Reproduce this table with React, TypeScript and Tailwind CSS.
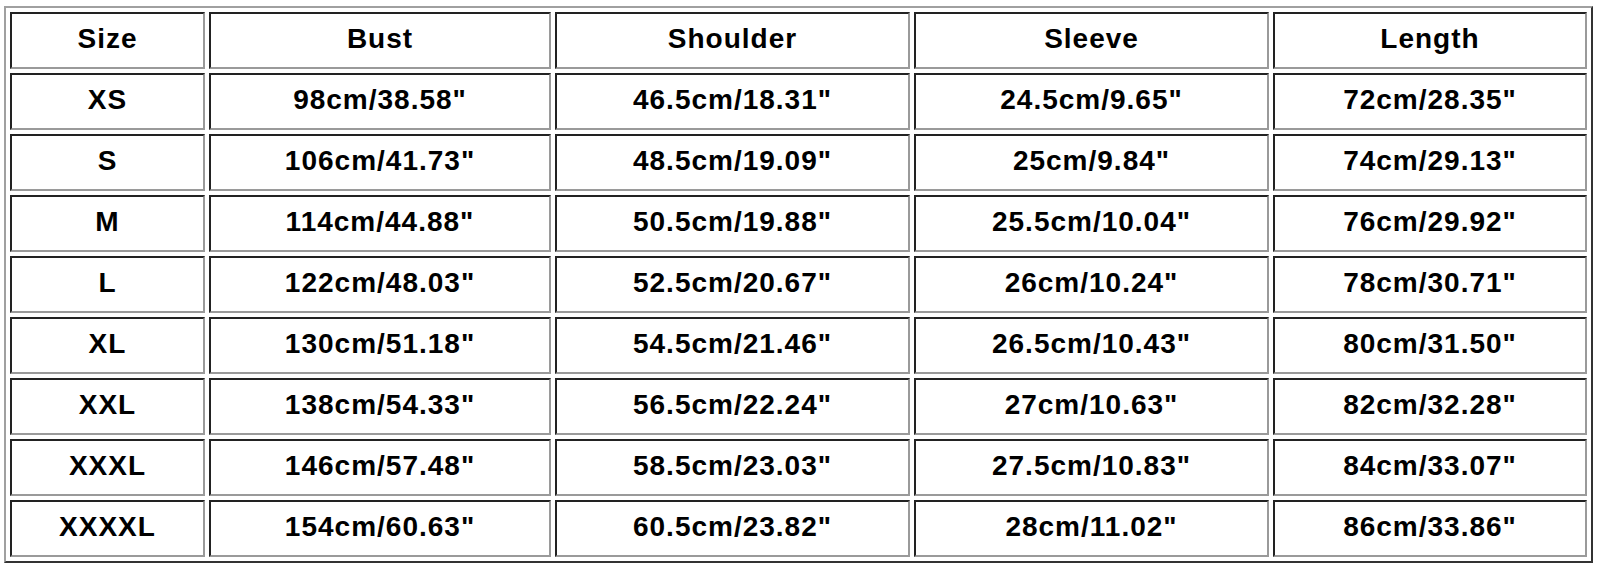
const headers = ["Size", "Bust", "Shoulder", "Sleeve", "Length"];

const widths = ["w-[195px]", "w-[342px]", "w-[355px]", "w-[355px]", "w-[314px]"];

const rows: string[][] = [
  ["XS", '98cm/38.58"', '46.5cm/18.31"', '24.5cm/9.65"', '72cm/28.35"'],
  ["S", '106cm/41.73"', '48.5cm/19.09"', '25cm/9.84"', '74cm/29.13"'],
  ["M", '114cm/44.88"', '50.5cm/19.88"', '25.5cm/10.04"', '76cm/29.92"'],
  ["L", '122cm/48.03"', '52.5cm/20.67"', '26cm/10.24"', '78cm/30.71"'],
  ["XL", '130cm/51.18"', '54.5cm/21.46"', '26.5cm/10.43"', '80cm/31.50"'],
  ["XXL", '138cm/54.33"', '56.5cm/22.24"', '27cm/10.63"', '82cm/32.28"'],
  ["XXXL", '146cm/57.48"', '58.5cm/23.03"', '27.5cm/10.83"', '84cm/33.07"'],
  ["XXXXL", '154cm/60.63"', '60.5cm/23.82"', '28cm/11.02"', '86cm/33.86"'],
];

const cell =
  "h-[57px] border-2 border-t-[#222] border-l-[#222] border-b-[#9a9a9a] border-r-[#9a9a9a] p-0 pb-[3px] text-center align-middle";

export default function App() {
  return (
    <div className="min-h-[565px] bg-white pl-1 pt-1.5 font-['Liberation_Sans',Arial,sans-serif] text-[28px] leading-none tracking-[1px] font-bold text-black">
      <table className="table-fixed border-separate border-spacing-1 border-2 border-t-[#a0a0a0] border-l-[#a0a0a0] border-b-[#333] border-r-[#333]">
        <thead>
          <tr>
            {headers.map((h, i) => (
              <th key={h} className={`${cell} ${widths[i]} font-bold`}>
                {h}
              </th>
            ))}
          </tr>
        </thead>
        <tbody>
          {rows.map((r) => (
            <tr key={r[0]}>
              {r.map((v, i) => (
                <td key={i} className={cell}>
                  {v}
                </td>
              ))}
            </tr>
          ))}
        </tbody>
      </table>
    </div>
  );
}
